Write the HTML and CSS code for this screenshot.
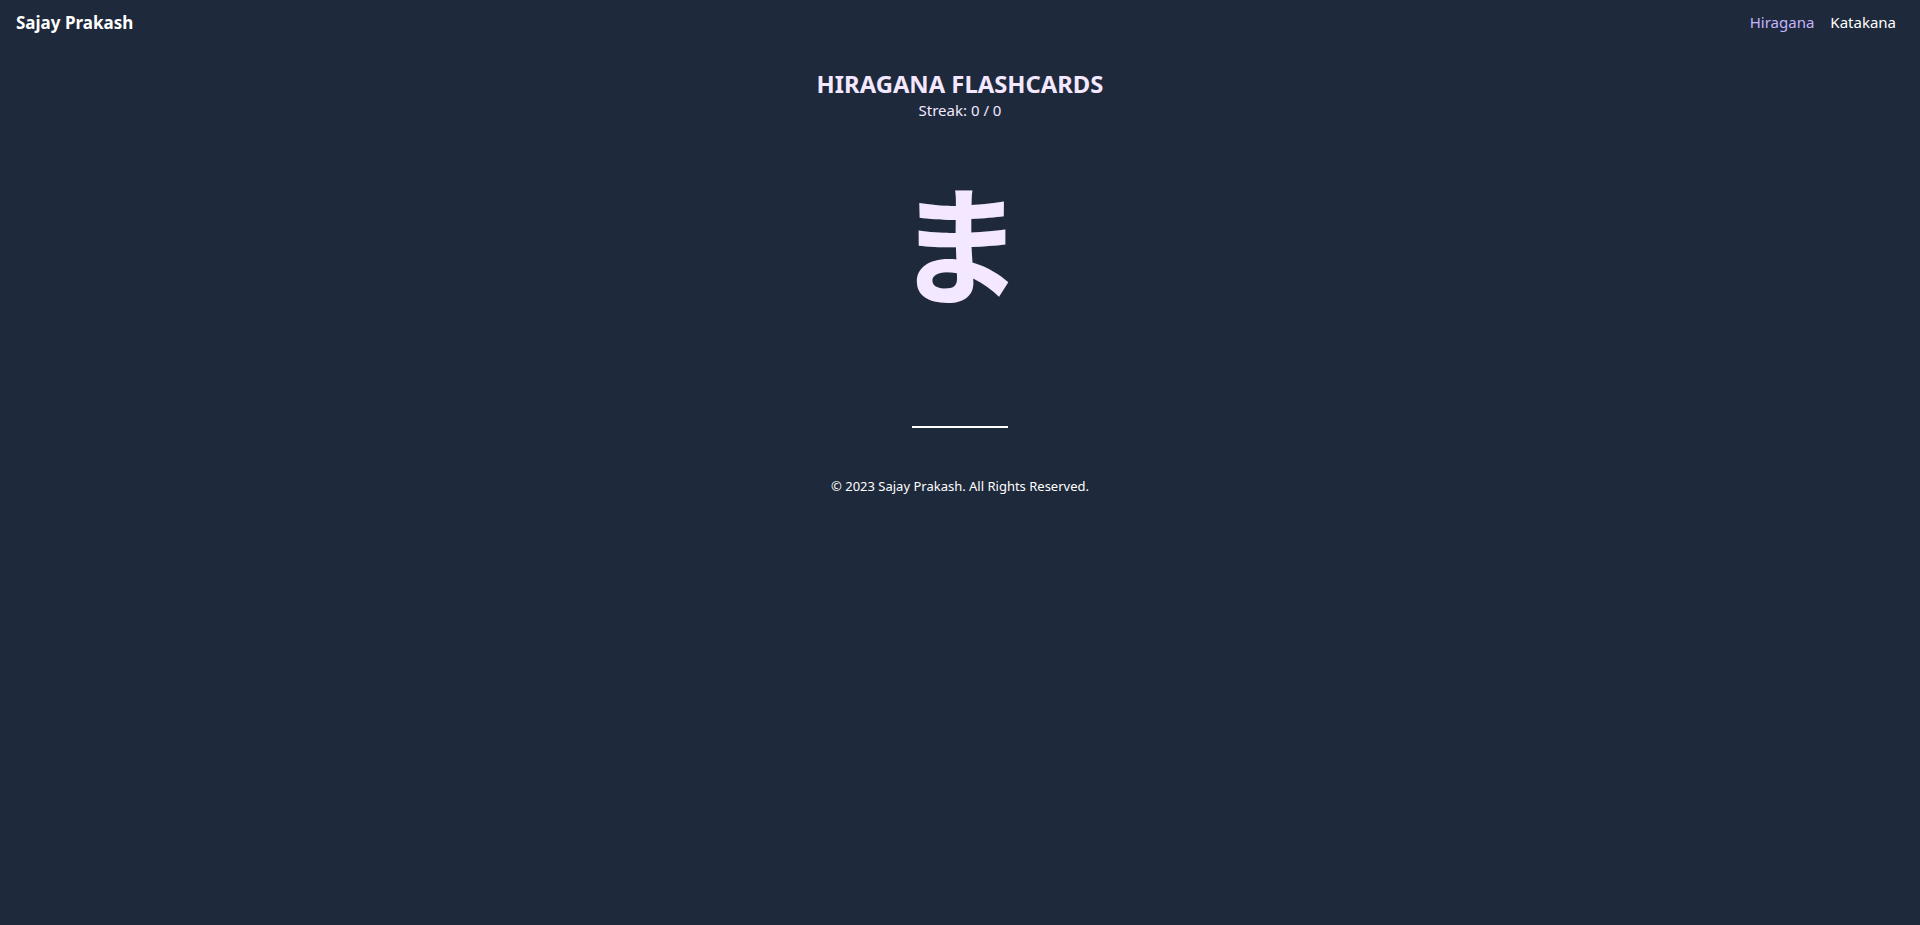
FILE: index.html
```html
<!DOCTYPE html>
<html lang="en">
<head>
<meta charset="utf-8">
<title>Hiragana Flashcards</title>
<link rel="stylesheet" href="styles.css">
</head>
<body>
<nav class="nav">
  <a class="brand" href="#">Sajay Prakash</a>
  <div class="links">
    <a class="link active" href="#">Hiragana</a>
    <a class="link" href="#">Katakana</a>
  </div>
</nav>
<main class="main">
  <h1 class="title">HIRAGANA FLASHCARDS</h1>
  <p class="streak">Streak: 0 / 0</p>
  <div class="kana" lang="ja">ま</div>
  <input class="answer" type="text" aria-label="answer">
</main>
<footer class="footer">© 2023 Sajay Prakash. All Rights Reserved.</footer>
</body>
</html>
```

FILE: styles.css
```css
html, body {
  margin: 0;
  padding: 0;
  background: #1e293b;
  height: 100%;
}
body {
  font-family: "Noto Sans", "Open Sans", sans-serif;
  color: #ffffff;
}
a { text-decoration: none; color: inherit; }
.nav {
  display: flex;
  justify-content: space-between;
  align-items: center;
  height: 44px;
  padding: 0 24px 0 16px;
}
.brand {
  font-weight: 700;
  font-size: 17px;
  color: #ffffff;
}
.links {
  display: flex;
  gap: 16px;
}
.link {
  font-size: 15px;
  color: #ffffff;
}
.link.active { color: #c4b5fd; }
.main {
  display: flex;
  flex-direction: column;
  align-items: center;
}
.title {
  margin: 24px 0 0;
  font-size: 23.8px;
  line-height: 32px;
  font-weight: 700;
  color: #f3e8ff;
}
.streak {
  margin: 0;
  font-size: 15px;
  line-height: 20px;
  color: #f3e8ff;
}
.kana {
  margin-top: 56px;
  font-family: "Noto Sans CJK JP", sans-serif;
  font-weight: 700;
  font-size: 128px;
  line-height: 1;
  color: #f3e8ff;
}
.answer {
  margin-top: 98px;
  width: 96px;
  height: 24px;
  padding: 0;
  background: transparent;
  border: none;
  border-bottom: 2px solid #ffffff;
  outline: none;
  color: #ffffff;
  text-align: center;
}
.footer {
  margin-top: 48px;
  text-align: center;
  font-size: 13px;
  line-height: 20px;
  color: #ffffff;
}
```
